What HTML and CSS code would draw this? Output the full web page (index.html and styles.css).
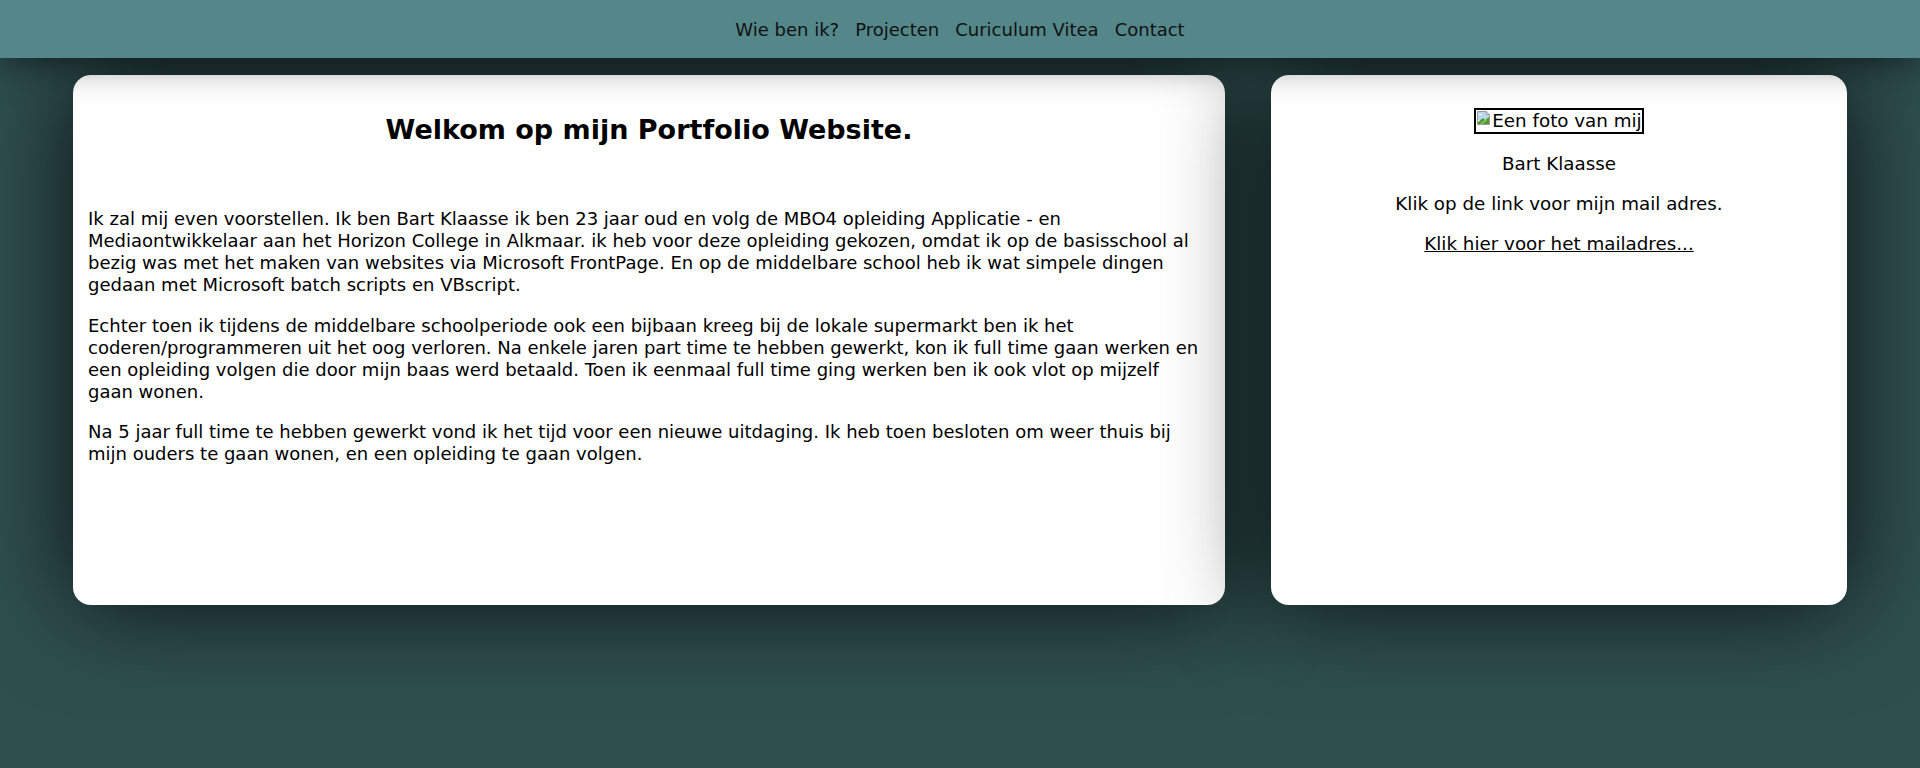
FILE: index.html
```html
<!DOCTYPE html>
<html lang="nl">
<head>
<meta charset="utf-8">
<title>Portfolio Bart Klaasse</title>
<link rel="stylesheet" href="styles.css">
</head>
<body>
<nav class="topnav">
  <a class="nav-link" href="#">Wie ben ik?</a>
  <a class="nav-link" href="#">Projecten</a>
  <a class="nav-link" href="#">Curiculum Vitea</a>
  <a class="nav-link" href="#">Contact</a>
</nav>
<main class="content">
  <section class="card card-main">
    <h1 class="title">Welkom op mijn Portfolio Website.</h1>
    <p class="text">Ik zal mij even voorstellen. Ik ben Bart Klaasse ik ben 23 jaar oud en volg de MBO4 opleiding Applicatie - en Mediaontwikkelaar aan het Horizon College in Alkmaar. ik heb voor deze opleiding gekozen, omdat ik op de basisschool al bezig was met het maken van websites via Microsoft FrontPage. En op de middelbare school heb ik wat simpele dingen gedaan met Microsoft batch scripts en VBscript.</p>
    <p class="text">Echter toen ik tijdens de middelbare schoolperiode ook een bijbaan kreeg bij de lokale supermarkt ben ik het coderen/programmeren uit het oog verloren. Na enkele jaren part time te hebben gewerkt, kon ik full time gaan werken en een opleiding volgen die door mijn baas werd betaald. Toen ik eenmaal full time ging werken ben ik ook vlot op mijzelf gaan wonen.</p>
    <p class="text">Na 5 jaar full time te hebben gewerkt vond ik het tijd voor een nieuwe uitdaging. Ik heb toen besloten om weer thuis bij mijn ouders te gaan wonen, en een opleiding te gaan volgen.</p>
  </section>
  <aside class="card card-side">
    <p class="side-text"><span class="photo"><svg class="photo-icon" width="16" height="16" viewBox="0 0 16 16"><path d="M1.5 1.5h9l3 3v10h-12z" fill="#fff" stroke="#9a9a9a"/><path d="M10.5 1.5v3h3" fill="#e8e8e8" stroke="#9a9a9a"/><path d="M2 2h8v3h3v5H2z" fill="#bcd6ee"/><path d="M3 4h3v1H3z" fill="#fff"/><path d="M2 14V12l5-4 2 2 4-3v7z" fill="#4f9a2f"/><path d="M4 14l6-5 1 1-5 4z" fill="#8ccf6a"/></svg>Een foto van mij</span></p>
    <p class="side-text">Bart Klaasse</p>
    <p class="side-text">Klik op de link voor mijn mail adres.</p>
    <p class="side-text"><a class="mail-link" href="#">Klik hier voor het mailadres...</a></p>
  </aside>
</main>
</body>
</html>
```
FILE: styles.css
```css
html, body {
  margin: 0;
  padding: 0;
}
body {
  background: #2f4f4f;
  font-family: "DejaVu Sans", sans-serif;
  font-size: 18px;
  color: #000;
  min-height: 768px;
}
.topnav {
  position: sticky;
  top: 0;
  z-index: 2;
  height: 58px;
  background: #548789;
  display: flex;
  justify-content: center;
  align-items: center;
  gap: 16px;
  box-shadow: 0 0 40px rgba(0, 0, 0, 0.7);
}
.nav-link {
  color: #111;
  text-decoration: none;
  font-size: 18px;
}
.content {
  display: flex;
  gap: 46px;
  padding: 17px 73px 0;
}
.card {
  background: #fff;
  border-radius: 18px;
  height: 530px;
  box-sizing: border-box;
  box-shadow: 0 0 100px rgba(0, 0, 0, 0.8);
}
.card-main {
  width: 1152px;
  padding: 39px 15px 15px;
}
.card-side {
  width: 576px;
  padding: 15px;
  text-align: center;
}
.title {
  font-size: 27px;
  font-weight: bold;
  text-align: center;
  margin: 0 0 63px;
}
.text {
  font-size: 18px;
  line-height: 22px;
  margin: 0 6px 18.5px 0;
}
.side-text {
  font-size: 18.3px;
  line-height: 1.2;
  margin: 18.3px 0;
}
.photo {
  display: inline-block;
  border: 2px solid #000;
  line-height: 22px;
  vertical-align: top;
}
.photo-icon {
  vertical-align: top;
}
.mail-link {
  color: #000;
  text-decoration: underline;
}
```
